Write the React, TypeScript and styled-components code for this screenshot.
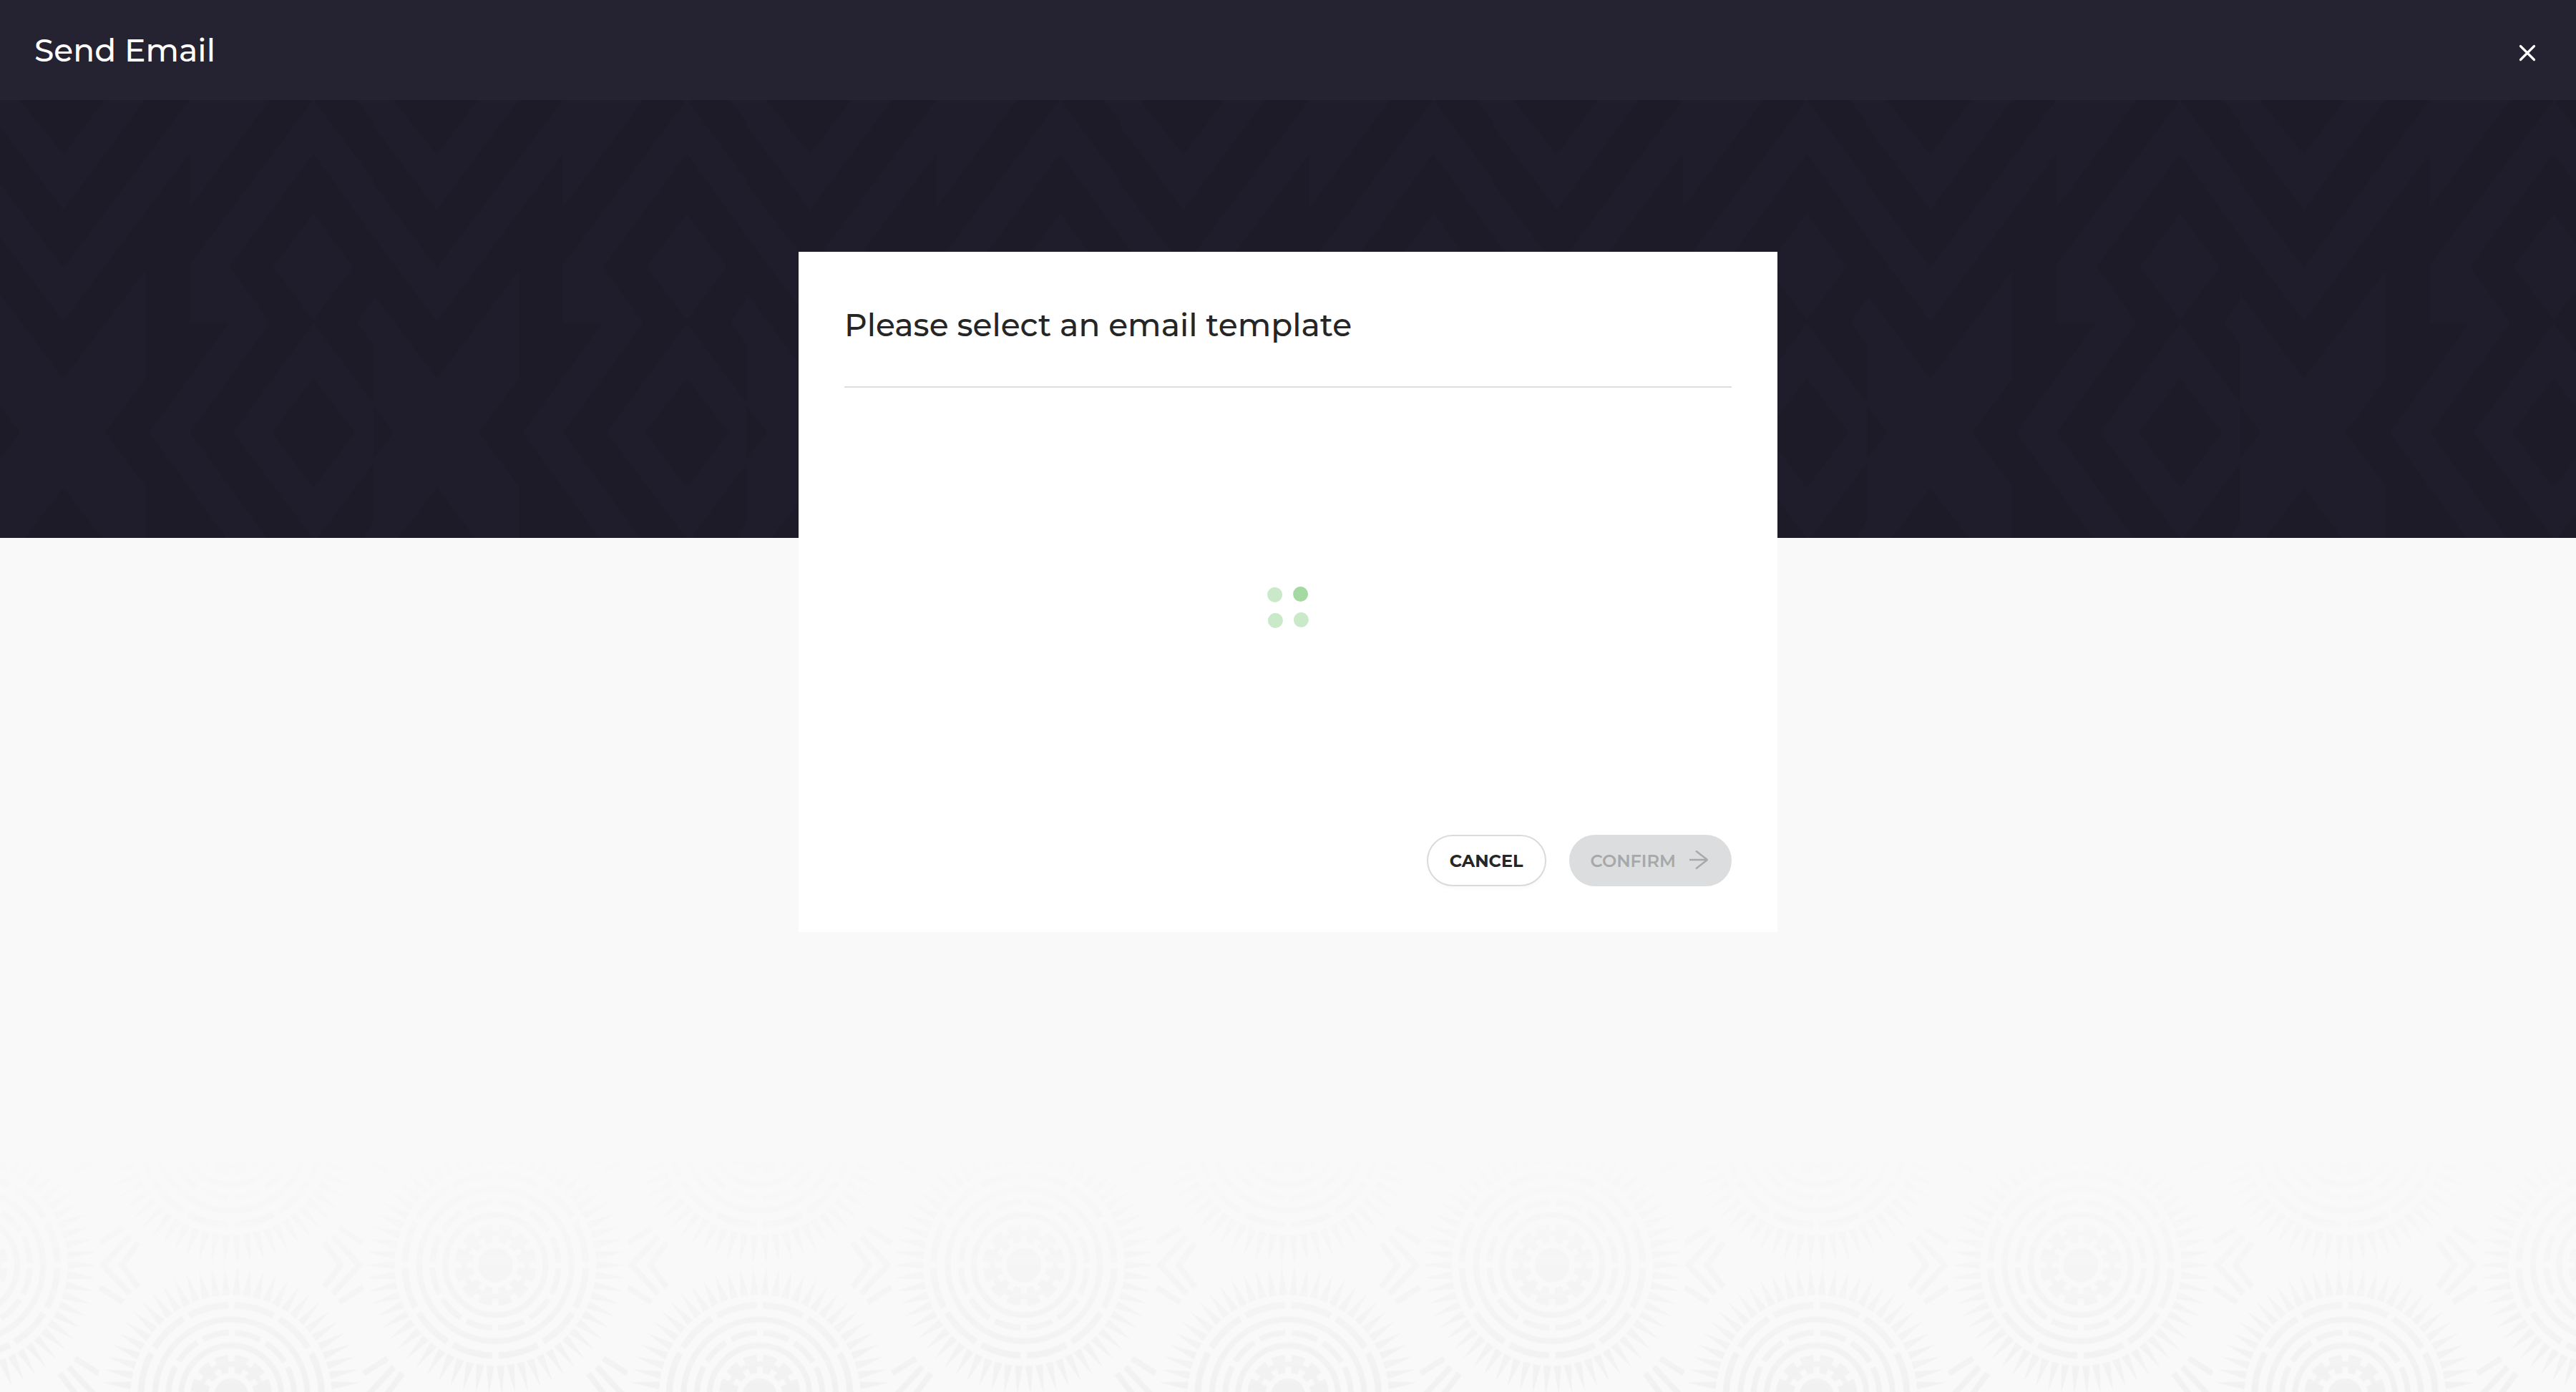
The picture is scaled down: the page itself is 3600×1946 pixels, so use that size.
import React from "react";
import styled, { createGlobalStyle } from "styled-components";

const GlobalStyle = createGlobalStyle`
  *, *::before, *::after { box-sizing: border-box; }
  body {
    margin: 0;
    background: #f9f9f9;
    font-family: Montserrat, Inter, "Liberation Sans", sans-serif;
    color: #262626;
  }
  h1, h2 { margin: 0; }
`;

const Page = styled.div`
  display: flex;
  flex-direction: column;
  min-height: 100vh;
`;

const TopBar = styled.header`
  display: flex;
  align-items: center;
  justify-content: space-between;
  height: 140px;
  padding: 0 48px;
  background: #252231;
  color: #ffffff;
`;

const Title = styled.h1`
  font-size: 44px;
  line-height: 56px;
  font-weight: 500;
`;

const IconButton = styled.button`
  display: grid;
  place-items: center;
  width: 40px;
  height: 48px;
  padding: 8px 0 0;
  border: 0;
  background: none;
  color: inherit;
  cursor: pointer;
`;

const Stage = styled.main`
  flex: 1;
  display: grid;
  grid-template-columns: minmax(0, 1fr);

  > * {
    grid-area: 1 / 1;
  }
`;

const HeroBand = styled.svg`
  display: block;
  width: 100%;
  height: 612px;
  align-self: start;
  background: #1f1c2c;
`;

const FooterBand = styled.svg`
  display: block;
  width: 100%;
  height: 334px;
  align-self: end;
  mask-image: linear-gradient(to bottom, transparent, #000);
`;

const Dialog = styled.section`
  display: flex;
  flex-direction: column;
  align-self: start;
  justify-self: center;
  width: 38%;
  min-width: 800px;
  margin-top: 212px;
  padding: 64px;
  background: #ffffff;
`;

const DialogTitle = styled.h2`
  padding: 10px 0 58px;
  border-bottom: 2px solid #dddddd;
  font-size: 44px;
  line-height: 56px;
  font-weight: 500;
`;

const LoadingArea = styled.div`
  display: grid;
  place-items: center;
  height: 614px;
`;

const Actions = styled.footer`
  display: flex;
  justify-content: flex-end;
  gap: 32px;
  margin-top: 11px;
`;

const PillButton = styled.button<{ $variant: "outline" | "solid" }>`
  display: flex;
  align-items: center;
  justify-content: center;
  gap: 18px;
  height: 72px;
  padding: ${(p) => (p.$variant === "outline" ? "0 30px" : "0 30px 0 28px")};
  border: 2px solid ${(p) => (p.$variant === "outline" ? "#dadada" : "#dcddde")};
  border-radius: 36px;
  background: ${(p) => (p.$variant === "outline" ? "#ffffff" : "#dcddde")};
  box-shadow: ${(p) => (p.$variant === "outline" ? "0 4px 4px rgba(0, 0, 0, 0.02)" : "none")};
  color: ${(p) => (p.$variant === "outline" ? "#262626" : "#a7a8a9")};
  font-family: inherit;
  font-size: 24px;
  line-height: 32px;
  font-weight: ${(p) => (p.$variant === "outline" ? 700 : 600)};
  text-transform: uppercase;
`;

const PillLabel = styled.span`
  padding-top: 2px;
`;

const TILE_W = 738.5;
const TILE_H = 365;

function spikes(count: number, inner: number, outer: number) {
  const step = (Math.PI * 2) / count;
  const half = step * 0.38;
  const at = (r: number, a: number) =>
    `${(r * Math.cos(a)).toFixed(2)} ${(r * Math.sin(a)).toFixed(2)}`;
  let d = "";
  for (let i = 0; i < count; i++) {
    const a = i * step;
    d += `M${at(inner, a - half)}L${at(outer, a)}L${at(inner, a + half)}Z`;
  }
  return d;
}

/** A ring cut into twelve dashes, with the gaps on every thirty degrees. */
function DashedRing({ r, width, gap }: { r: number; width: number; gap: number }) {
  const arc = (Math.PI * 2 * r) / 12;
  return (
    <circle
      r={r}
      fill="none"
      strokeWidth={width}
      strokeDasharray={`${arc - gap} ${gap}`}
      strokeDashoffset={-gap / 2}
    />
  );
}

function Sun() {
  return (
    <g id="sun" fill="#f1f1f1" stroke="#f1f1f1">
      <circle r={24} stroke="none" />
      <DashedRing r={38} width={12} gap={9} />
      <circle r={44} fill="none" strokeWidth={7} />
      <DashedRing r={51} width={12} gap={9} />
      <circle r={70} fill="none" strokeWidth={8} />
      <DashedRing r={88} width={8} gap={9} />
      <circle r={106.5} fill="none" strokeWidth={8} />
      <DashedRing r={126.5} width={9} gap={9} />
      <path d={spikes(62, 141, 181)} stroke="none" />
    </g>
  );
}

function Chevrons() {
  return (
    <g id="chevrons" fill="none" stroke="#f1f1f1" strokeWidth={8}>
      <path d="M-142 -40L-179 0L-142 40M-130 -31L-153 0L-130 31M-151 -52L-184 -31M-151 52L-184 31" />
      <path d="M142 -40L179 0L142 40M130 -31L153 0L130 31M151 -52L184 -31M151 52L184 31" />
    </g>
  );
}

function SunPattern() {
  const left = TILE_W / 4;
  const right = (TILE_W * 3) / 4;
  const mid = TILE_H / 2;
  return (
    <FooterBand aria-hidden="true">
      <defs>
        <Sun />
        <Chevrons />
        <pattern
          id="suns"
          width={TILE_W}
          height={TILE_H}
          patternUnits="userSpaceOnUse"
          patternTransform="translate(138.5 156.5)"
        >
          <use href="#sun" x={left} y={mid} />
          <use href="#sun" x={right} y={0} />
          <use href="#sun" x={right} y={TILE_H} />
          <use href="#chevrons" x={left} y={0} />
          <use href="#chevrons" x={left} y={TILE_H} />
          <use href="#chevrons" x={right} y={mid} />
        </pattern>
      </defs>
      <rect width="100%" height="100%" fill="url(#suns)" />
    </FooterBand>
  );
}

function DiamondPattern() {
  return (
    <HeroBand aria-hidden="true">
      <defs>
        <pattern id="diamonds" width={521.8} height={612} patternUnits="userSpaceOnUse">
          <g transform="scale(0.7143 0.408) translate(0 -24)" fill="#1e1b28" fillRule="evenodd">
            <path d="M38 24H205L124 212Z" />
            <path d="M0 112L124 398L283 24H371L124 600L0 312Z" />
            <path d="M0 490L124 780L371 205V390L527 24H613L371 590V787H449L293 1163L443 1524H285V1350L205 1163L285 975V610L124 980L0 690Z" />
            <path d="M613 24H699L731 100V300Z" />
            <path d="M613 205L731 490V705L699 787L731 860V1065L613 790L457 1163L613 1524H521L371 1163L527 787L449 595ZM613 415L535 595L613 775L690 595Z" />
            <path d="M613 975L695 1163L613 1355L531 1163Z" />
            <path d="M731 1265V1465L713 1524H620Z" />
            <path d="M0 1070L40 1163L0 1255Z" />
            <path d="M124 1350L200 1524H48Z" />
          </g>
        </pattern>
      </defs>
      <rect width="100%" height="100%" fill="url(#diamonds)" />
    </HeroBand>
  );
}

function CloseIcon() {
  return (
    <svg width="24" height="24" viewBox="0 0 24 24" fill="none" stroke="currentColor" strokeWidth="3.2" strokeLinecap="round" aria-hidden="true">
      <path d="M2.5 2.5L21.5 21.5M21.5 2.5L2.5 21.5" />
    </svg>
  );
}

function ArrowIcon() {
  return (
    <svg width="28" height="28" viewBox="0 0 28 28" fill="none" stroke="currentColor" strokeWidth="2.4" aria-hidden="true">
      <path d="M1 13H26M10 0.5L26 13L10 25.5" strokeLinejoin="bevel" />
    </svg>
  );
}

function Spinner() {
  return (
    <svg width="60" height="60" viewBox="-30 -30 60 60" role="img" aria-label="Loading">
      <g transform="rotate(-1.3)" fill="#c9e9c8">
        <circle cx="-18" cy="-18" r="10.5" />
        <circle cx="18" cy="-18" r="10.5" fill="#a5d9a2" />
        <circle cx="-18" cy="18" r="10.5" />
        <circle cx="18" cy="18" r="10.5" />
      </g>
    </svg>
  );
}

export default function App() {
  return (
    <>
      <GlobalStyle />
      <Page>
        <TopBar>
          <Title>Send Email</Title>
          <IconButton type="button" aria-label="Close">
            <CloseIcon />
          </IconButton>
        </TopBar>
        <Stage>
          <DiamondPattern />
          <SunPattern />
          <Dialog role="dialog" aria-labelledby="dialog-title">
            <DialogTitle id="dialog-title">Please select an email template</DialogTitle>
            <LoadingArea>
              <Spinner />
            </LoadingArea>
            <Actions>
              <PillButton type="button" $variant="outline">
                <PillLabel>Cancel</PillLabel>
              </PillButton>
              <PillButton type="button" $variant="solid" disabled>
                <PillLabel>Confirm</PillLabel>
                <ArrowIcon />
              </PillButton>
            </Actions>
          </Dialog>
        </Stage>
      </Page>
    </>
  );
}
